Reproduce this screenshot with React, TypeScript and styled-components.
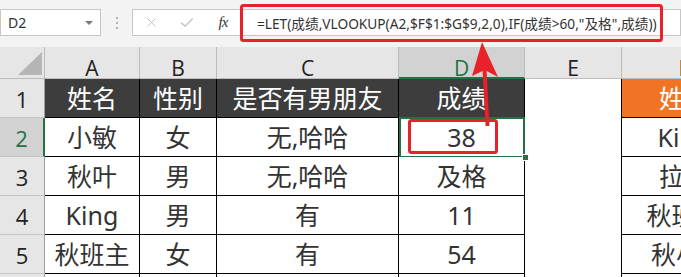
import React from 'react';
import styled, { createGlobalStyle, css } from 'styled-components';
import { X, Check } from 'lucide-react';

const GlobalStyle = createGlobalStyle`
  html, body {
    margin: 0;
    padding: 0;
    background: #fff;
    overflow: hidden;
  }
  body {
    font-family: "Noto Sans", "Noto Sans CJK SC", sans-serif;
  }
`;

const Page = styled.div`
  position: relative;
  width: 681px;
  height: 277px;
  overflow: hidden;
`;

const TopBar = styled.div`
  display: flex;
  align-items: flex-start;
  height: 47px;
  padding-top: 9px;
  box-sizing: border-box;
  background: #f3f3f3;
`;

const NameBox = styled.div`
  width: 101px;
  height: 27px;
  box-sizing: border-box;
  border: 1px solid #c6c6c6;
  background: #fff;
  display: flex;
  align-items: center;
  justify-content: space-between;
  padding: 0 7px 0 7px;
  font-size: 14px;
  color: #333;
`;

const Caret = styled.span`
  width: 0;
  height: 0;
  border-left: 4px solid transparent;
  border-right: 4px solid transparent;
  border-top: 4px solid #7a7a7a;
`;

const Dots = styled.div`
  width: 31px;
  height: 27px;
  display: flex;
  flex-direction: column;
  align-items: center;
  justify-content: center;
  gap: 3px;

  span {
    width: 2px;
    height: 2px;
    background: #b4b4b4;
  }
`;

const FuncBox = styled.div`
  width: 109px;
  height: 27px;
  box-sizing: border-box;
  border: 1px solid #c6c6c6;
  border-right: none;
  background: #fff;
  display: flex;
  align-items: center;
`;

const IconSlot = styled.div`
  width: 36px;
  display: flex;
  align-items: center;
  justify-content: center;
`;

const Fx = styled.span`
  font-family: "Liberation Serif", serif;
  font-style: italic;
  font-size: 15px;
  color: #333;
  letter-spacing: -1px;
`;

const FormulaInput = styled.div`
  flex: 1;
  height: 27px;
  box-sizing: border-box;
  border: 1px solid #c6c6c6;
  background: #fff;
  display: flex;
  align-items: center;
  padding-left: 15px;
  font-size: 13.7px;
  color: #333;
  white-space: nowrap;
  overflow: hidden;
`;

const Sheet = styled.div`
  display: grid;
  grid-template-columns: 45px 95px 77px 182px 126px 97px 125px 100px;
  grid-template-rows: 32px repeat(6, 39px);
`;

const Corner = styled.div`
  background: #e6e6e6;
  border-right: 1px solid #bcbcbc;
  border-bottom: 1px solid #bcbcbc;
  display: flex;
  align-items: flex-end;
  justify-content: flex-end;
  padding: 0 2px 3px 0;
`;

const CornerTriangle = styled.div`
  width: 24px;
  height: 23px;
  background: #b5b5b5;
  clip-path: polygon(100% 0, 100% 100%, 0 100%);
`;

const ColHead = styled.div<{ $selected?: boolean }>`
  background: ${p => (p.$selected ? '#d2d2d2' : '#e6e6e6')};
  border-right: 1px solid #bcbcbc;
  border-bottom: ${p => (p.$selected ? '2px solid #217346' : '1px solid #bcbcbc')};
  color: ${p => (p.$selected ? '#217346' : '#222')};
  font-family: "Open Sans", sans-serif;
  font-size: 21px;
  line-height: 21px;
  padding-top: 11px;
  text-align: center;
`;

const RowHead = styled.div<{ $selected?: boolean }>`
  background: ${p => (p.$selected ? '#d2d2d2' : '#e6e6e6')};
  border-right: ${p => (p.$selected ? '2px solid #217346' : '1px solid #9f9f9f')};
  border-bottom: 1px solid #c6c6c6;
  color: ${p => (p.$selected ? '#217346' : '#222')};
  font-family: "Open Sans", sans-serif;
  font-size: 22px;
  display: flex;
  align-items: center;
  justify-content: center;
  padding-top: 2px;
`;

type Variant = 'head' | 'orange' | 'data' | 'empty';

const Cell = styled.div<{ $variant: Variant; $selected?: boolean }>`
  position: relative;
  display: flex;
  align-items: center;
  justify-content: center;
  white-space: nowrap;
  font-size: 25px;
  line-height: 1;
  color: #333;
  border-right: 1px solid #000;
  border-bottom: ${p => (p.$variant === 'empty' ? 'none' : '1px solid #000')};
  background: ${p =>
    p.$variant === 'head' ? '#3d3d3d' : p.$variant === 'orange' ? '#f07424' : '#fff'};
  ${p =>
    (p.$variant === 'head' || p.$variant === 'orange') &&
    css`
      color: #fff;
    `}
  ${p =>
    p.$selected &&
    css`
      &::after {
        content: '';
        position: absolute;
        top: -1px;
        left: 0;
        right: -1px;
        bottom: -2px;
        border: 2px solid #217346;
      }
      &::before {
        content: '';
        position: absolute;
        right: -5px;
        bottom: -5px;
        width: 5px;
        height: 5px;
        background: #217346;
        border: 1px solid #fff;
        z-index: 1;
      }
    `}
`;

const Annotation = styled.svg`
  position: absolute;
  top: 0;
  left: 0;
  pointer-events: none;
`;

const columns = ['A', 'B', 'C', 'D', 'E', 'F', 'G'];

const rows: string[][] = [
  ['姓名', '性别', '是否有男朋友', '成绩', '', '姓名', ''],
  ['小敏', '女', '无,哈哈', '38', '', 'King', ''],
  ['秋叶', '男', '无,哈哈', '及格', '', '拉拉', ''],
  ['King', '男', '有', '11', '', '秋班主', ''],
  ['秋班主', '女', '有', '54', '', '秋小A', ''],
  ['', '', '', '', '', '', ''],
];

const variantFor = (row: number, col: number): Variant => {
  if (col === 4) return 'empty';
  if (row === 0) return col === 5 ? 'orange' : col === 6 ? 'data' : 'head';
  return 'data';
};

const App: React.FC = () => {
  const red = '#e8212b';
  return (
    <Page>
      <GlobalStyle />
      <TopBar>
        <NameBox>
          D2
          <Caret />
        </NameBox>
        <Dots>
          <span />
          <span />
          <span />
        </Dots>
        <FuncBox>
          <IconSlot>
            <X size={15} color="#b8b8b8" strokeWidth={1.3} />
          </IconSlot>
          <IconSlot>
            <Check size={16} color="#c4c4c4" strokeWidth={2.2} />
          </IconSlot>
          <IconSlot>
            <Fx>fx</Fx>
          </IconSlot>
        </FuncBox>
        <FormulaInput>=LET(成绩,VLOOKUP(A2,$F$1:$G$9,2,0),IF(成绩&gt;60,"及格",成绩))</FormulaInput>
      </TopBar>
      <Sheet>
        <Corner>
          <CornerTriangle />
        </Corner>
        {columns.map(c => (
          <ColHead key={c} $selected={c === 'D'}>
            {c}
          </ColHead>
        ))}
        {rows.map((row, r) => (
          <React.Fragment key={r}>
            <RowHead $selected={r === 1}>{r + 1}</RowHead>
            {row.map((text, c) => (
              <Cell key={c} $variant={variantFor(r, c)} $selected={r === 1 && c === 3}>
                {text}
              </Cell>
            ))}
          </React.Fragment>
        ))}
      </Sheet>
      <Annotation width={681} height={277} viewBox="0 0 681 277">
        <rect x={241.5} y={5.5} width={420} height={35} rx={2} fill="none" stroke={red} strokeWidth={3} />
        <rect x={409.5} y={120.5} width={87} height={32} rx={2} fill="none" stroke={red} strokeWidth={3} />
        <polygon
          points="482,42 498,77 486.6,71 489.4,126 485.6,126 482.6,71 472,76"
          fill={red}
        />
      </Annotation>
    </Page>
  );
};

export default App;
